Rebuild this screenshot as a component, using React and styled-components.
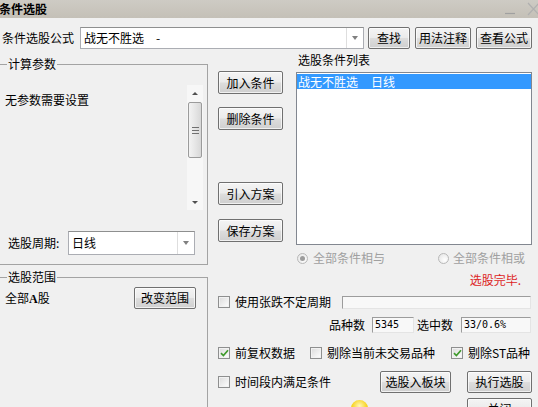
import React from 'react';
import styled, { createGlobalStyle } from 'styled-components';

const GlobalStyle = createGlobalStyle`
  html, body { margin: 0; padding: 0; background: #f0f0f0; }
  * { box-sizing: border-box; }
`;

const Window = styled.div`
  position: relative;
  width: 538px;
  height: 407px;
  overflow: hidden;
  background: #f0f0f0;
  font-family: "Noto Sans CJK SC", "Noto Sans", sans-serif;
  font-size: 12px;
  line-height: 14px;
  color: #000;
`;

const TitleBar = styled.div`
  height: 18px;
  display: flex;
  align-items: center;
  justify-content: space-between;
  background: linear-gradient(#cecbc4, #c4c0b7);
`;

const Title = styled.div`
  font-weight: bold;
  margin-left: -1px;
`;

const FormulaRow = styled.div`
  display: flex;
  align-items: center;
  height: 22px;
  margin-top: 9px;
  padding-left: 2px;
`;

const FieldLabel = styled.div`
  width: ${p => p.$w}px;
  padding-left: ${p => p.$pl || 0}px;
  flex-shrink: 0;
  white-space: nowrap;
`;

const ComboBox = styled.div`
  display: flex;
  width: ${p => p.$w}px;
  height: ${p => p.$h}px;
  background: #fff;
  border: 1px solid #abadb3;
  border-top-color: #8e8f8f;
  flex-shrink: 0;
`;

const ComboText = styled.div`
  flex: 1;
  display: flex;
  align-items: center;
  padding-left: 3px;
  white-space: pre;
`;

const ComboArrow = styled.div`
  width: 17px;
  border-left: 1px solid #dedede;
  display: flex;
  align-items: center;
  justify-content: center;

  &::after {
    content: '';
    border-left: 3.5px solid transparent;
    border-right: 3.5px solid transparent;
    border-top: 4px solid #808080;
  }
`;

const Button = styled.button`
  width: ${p => p.$w}px;
  height: ${p => p.$h || 22}px;
  margin: ${p => p.$mt || 0}px 0 0 ${p => p.$ml || 0}px;
  padding: 0;
  flex-shrink: 0;
  font: inherit;
  color: #000;
  border: 1px solid #707070;
  border-radius: 2px;
  background: linear-gradient(#f4f4f4 0%, #ebebeb 48%, #dddddd 52%, #cfcfcf 100%);
  box-shadow: inset 0 0 0 1px rgba(255, 255, 255, 0.7);
  display: flex;
  align-items: center;
  justify-content: center;
`;

const Upper = styled.div`
  display: flex;
  height: 216px;
`;

const Group = styled.fieldset`
  margin: ${p => p.$mt}px 0 0 -2px;
  padding: 0;
  width: 210px;
  height: ${p => p.$h}px;
  min-width: 0;
  flex-shrink: 0;
  border: 1px solid #a3a3a3;
  display: flex;
  flex-direction: column;
`;

const Legend = styled.legend`
  margin-left: 8px;
  padding: 0 1px;
  line-height: 14px;
`;

const ParamArea = styled.div`
  display: flex;
  height: 125px;
  margin: 14px 4px 0 0;
`;

const ParamText = styled.div`
  flex: 1;
  padding: 8px 0 0 6px;
`;

const ScrollBar = styled.div`
  width: 16px;
  display: flex;
  flex-direction: column;
  background: #f7f7f7;
`;

const ScrollArrow = styled.div`
  height: 16px;
  display: flex;
  align-items: center;
  justify-content: center;

  &::after {
    content: '';
    border-left: 3px solid transparent;
    border-right: 3px solid transparent;
    ${p => p.$up ? 'border-bottom: 3px solid #505050;' : 'border-top: 3px solid #505050;'}
  }
`;

const Thumb = styled.div`
  margin: 1px 1px 0;
  height: 56px;
  border: 1px solid #9b9b9b;
  border-radius: 2px;
  background: linear-gradient(90deg, #f3f3f3, #e6e6e6 50%, #d8d8d8);
  display: flex;
  align-items: center;
  justify-content: center;
`;

const Track = styled.div`
  flex: 1;
`;

const PeriodRow = styled.div`
  display: flex;
  align-items: center;
  height: 24px;
  margin-top: 21px;
  padding-left: 9px;
`;

const MidCol = styled.div`
  width: 88px;
  padding-left: 10px;
  display: flex;
  flex-direction: column;
  flex-shrink: 0;
`;

const ListPanel = styled.div`
  width: 236px;
  display: flex;
  flex-direction: column;
`;

const ListLabel = styled.div`
  margin-top: 3px;
  padding-left: 2px;
  line-height: 15px;
`;

const ListBox = styled.div`
  margin-top: 5px;
  height: 174px;
  background: #fff;
  border: 1px solid #828790;
  padding-top: 1px;
`;

const ListItem = styled.div`
  height: 15px;
  line-height: 15px;
  padding-left: 1px;
  background: ${p => p.$selected ? '#3399ff' : 'transparent'};
  color: ${p => p.$selected ? '#fff' : '#000'};
  white-space: nowrap;
`;

const Gap = styled.span`
  margin-left: ${p => p.$w}px;
`;

const RadioRow = styled.div`
  display: flex;
  align-items: center;
  height: 14px;
  margin-top: 6px;
  padding-left: 1px;
  color: #a0a0a0;
`;

const OptionItem = styled.label`
  display: flex;
  align-items: center;
  gap: ${p => p.$gap || 5}px;
  width: ${p => p.$w ? `${p.$w}px` : 'auto'};
  flex-shrink: 0;
  white-space: nowrap;
`;

const Radio = styled.span`
  width: 11px;
  height: 11px;
  border-radius: 50%;
  border: 1px solid #b8b8b8;
  background: radial-gradient(circle at 65% 65%, #ffffff, #e2e2e2);
  display: flex;
  align-items: center;
  justify-content: center;

  &::after {
    content: '';
    width: 5px;
    height: 5px;
    border-radius: 50%;
    background: ${p => p.$on ? '#9c9c9c' : 'transparent'};
  }
`;

const Lower = styled.div`
  display: flex;
  height: 142px;
`;

const RangeRow = styled.div`
  display: flex;
  align-items: center;
  justify-content: space-between;
  height: 22px;
  margin-top: 3px;
  padding: 0 11px 0 6px;

  b {
    font-family: "Liberation Serif", serif;
    font-size: 12px;
  }
`;

const Options = styled.div`
  width: 324px;
  padding-left: 10px;
  display: flex;
  flex-direction: column;
  flex-shrink: 0;
`;

const Status = styled.div`
  margin-top: 8px;
  height: 14px;
  text-align: right;
  padding-right: 11px;
  color: #dd1e1e;
`;

const Row = styled.div`
  display: flex;
  align-items: center;
  justify-content: ${p => p.$end ? 'flex-end' : 'flex-start'};
  height: ${p => p.$h}px;
  margin-top: ${p => p.$mt}px;
  padding-right: ${p => p.$pr || 0}px;
  flex-shrink: 0;
`;

const Sunken = styled.div`
  width: ${p => p.$w}px;
  height: ${p => p.$h}px;
  margin-left: ${p => p.$ml || 0}px;
  border: 1px solid;
  border-color: #9c9c9c #e4e4e4 #e4e4e4 #9c9c9c;
  background: #f8f8f8;
  padding-left: 2px;
  font-family: "DejaVu Sans Mono", monospace;
  font-size: 10px;
  line-height: ${p => p.$h - 2}px;
  flex-shrink: 0;
`;

const Text = styled.span`
  margin: 0 ${p => p.$mr || 0}px 0 ${p => p.$ml || 0}px;
  white-space: nowrap;
`;

const Check = styled.span`
  width: 12px;
  height: 12px;
  border: 1px solid #8e8f8f;
  background: linear-gradient(135deg, #dadada, #f4f4f4 70%, #ffffff);
  box-shadow: inset 0 0 0 1px #f2f2f2;
  display: flex;
  align-items: center;
  justify-content: center;
  flex-shrink: 0;
`;

const Coin = styled.div`
  position: absolute;
  left: 351px;
  top: 400px;
  width: 17px;
  height: 17px;
  border-radius: 50%;
  background: radial-gradient(circle at 50% 35%, #fff8b8, #f8d21c 55%, #e9a800);
`;

const CheckBox = ({ checked }) => (
  <Check>
    {checked && (
      <svg width="9" height="8" viewBox="0 0 9 8">
        <path d="M1 4.2l2.4 2.3L8 1.2" fill="none" stroke="#3f9a2c" strokeWidth="1.7" />
      </svg>
    )}
  </Check>
);

const CheckOption = ({ w, checked, children }) => (
  <OptionItem $w={w}>
    <CheckBox checked={checked} />
    <span>{children}</span>
  </OptionItem>
);

const WindowControls = () => (
  <svg width="35" height="18" viewBox="0 0 35 18">
    <path d="M2 13.5h10" stroke="#a0a0a0" strokeWidth="1.2" />
    <path d="M25 3l11 12M36 3L25 15" stroke="#b0b0b0" strokeWidth="1.2" />
  </svg>
);

export default function App() {
  return (
    <>
      <GlobalStyle />
      <Window>
        <TitleBar>
          <Title>条件选股</Title>
          <WindowControls />
        </TitleBar>

        <FormulaRow>
          <FieldLabel $w={78}>条件选股公式</FieldLabel>
          <ComboBox $w={284} $h={22}>
            <ComboText>战无不胜选<Gap $w={12}>-</Gap></ComboText>
            <ComboArrow />
          </ComboBox>
          <Button $w={42} $ml={4}>查找</Button>
          <Button $w={56} $ml={5}>用法注释</Button>
          <Button $w={56} $ml={5}>查看公式</Button>
        </FormulaRow>

        <Upper>
          <Group $mt={8} $h={208}>
            <Legend>计算参数</Legend>
            <ParamArea>
              <ParamText>无参数需要设置</ParamText>
              <ScrollBar>
                <ScrollArrow $up />
                <Thumb>
                  <svg width="7" height="7" viewBox="0 0 7 7">
                    <path d="M0 .5h7M0 3.5h7M0 6.5h7" stroke="#707070" />
                  </svg>
                </Thumb>
                <Track />
                <ScrollArrow />
              </ScrollBar>
            </ParamArea>
            <PeriodRow>
              <FieldLabel $w={60}>选股周期:</FieldLabel>
              <ComboBox $w={127} $h={24}>
                <ComboText>日线</ComboText>
                <ComboArrow />
              </ComboBox>
            </PeriodRow>
          </Group>

          <MidCol>
            <Button $w={65} $h={23} $mt={22}>加入条件</Button>
            <Button $w={65} $h={23} $mt={13}>删除条件</Button>
            <Button $w={65} $h={23} $mt={52}>引入方案</Button>
            <Button $w={65} $h={23} $mt={14}>保存方案</Button>
          </MidCol>

          <ListPanel>
            <ListLabel>选股条件列表</ListLabel>
            <ListBox>
              <ListItem $selected>战无不胜选<Gap $w={13}>日线</Gap></ListItem>
            </ListBox>
            <RadioRow>
              <OptionItem $w={141}>
                <Radio $on />
                <span>全部条件相与</span>
              </OptionItem>
              <OptionItem $gap={4}>
                <Radio />
                <span>全部条件相或</span>
              </OptionItem>
            </RadioRow>
          </ListPanel>
        </Upper>

        <Lower>
          <Group $mt={5} $h={150}>
            <Legend>选股范围</Legend>
            <RangeRow>
              <span>全部<b>A</b>股</span>
              <Button $w={62}>改变范围</Button>
            </RangeRow>
          </Group>

          <Options>
            <Status>选股完毕.</Status>
            <Row $h={14} $mt={8} $pr={1}>
              <CheckOption w={124}>使用张跌不定周期</CheckOption>
              <Sunken $w={189} $h={13} />
            </Row>
            <Row $h={16} $mt={8} $pr={1} $end>
              <Text $mr={7}>品种数</Text>
              <Sunken $w={42} $h={16}>5345</Sunken>
              <Text $ml={3} $mr={8}>选中数</Text>
              <Sunken $w={70} $h={16}>33/0.6%</Sunken>
            </Row>
            <Row $h={14} $mt={13}>
              <CheckOption w={92} checked>前复权数据</CheckOption>
              <CheckOption w={141}>剔除当前未交易品种</CheckOption>
              <CheckOption checked>剔除ST品种</CheckOption>
            </Row>
            <Row $h={22} $mt={11}>
              <CheckOption w={162}>时间段内满足条件</CheckOption>
              <Button $w={71}>选股入板块</Button>
              <Button $w={65} $ml={16}>执行选股</Button>
            </Row>
            <Row $h={22} $mt={5} $end>
              <Button $w={65}>关闭</Button>
            </Row>
          </Options>
        </Lower>

        <Coin />
      </Window>
    </>
  );
}
